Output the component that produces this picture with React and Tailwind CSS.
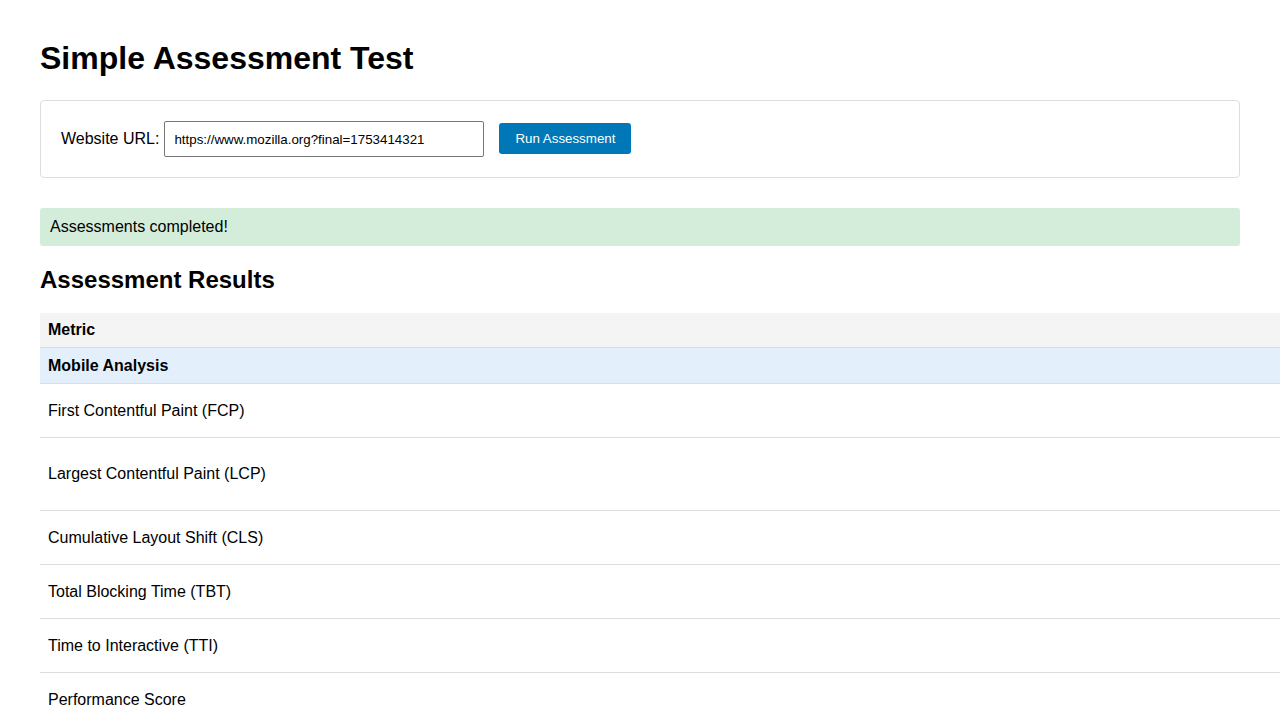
import React from 'react';

const rows = [
  { name: 'First Contentful Paint (FCP)', h: 'h-[54px]' },
  { name: 'Largest Contentful Paint (LCP)', h: 'h-[73px]' },
  { name: 'Cumulative Layout Shift (CLS)', h: 'h-[54px]' },
  { name: 'Total Blocking Time (TBT)', h: 'h-[54px]' },
  { name: 'Time to Interactive (TTI)', h: 'h-[54px]' },
  { name: 'Performance Score', h: 'h-[54px]' },
];

export default function App() {
  return (
    <div className="w-[1280px] h-[720px] overflow-hidden bg-white text-black font-['Liberation_Sans',Arial,sans-serif]">
      <div className="p-10">
        {/* Title */}
        <h1 className="text-[32px] leading-[37px] font-bold mb-[23px]">Simple Assessment Test</h1>

        {/* Form */}
        <div className="w-[1200px] border border-[#ddd] rounded p-5 flex items-center">
          <label className="text-base leading-[18px] mr-[5px]">Website URL:</label>
          <input
            type="text"
            readOnly
            value="https://www.mozilla.org?final=1753414321"
            className="w-[320px] h-9 border border-[#767676] rounded-[2px] px-[9px] text-[13.33px] text-black outline-none"
          />
          <button className="ml-[15px] -mt-[1px] h-[31px] px-4 bg-[#0078b8] text-white text-[13.33px] rounded-[3px]">
            Run Assessment
          </button>
        </div>

        {/* Status */}
        <div className="w-[1200px] mt-[30px] bg-[#d4edda] rounded-[3px] px-[10px] py-[10px] text-base leading-[18px]">
          Assessments completed!
        </div>

        <h2 className="mt-[20px] text-2xl leading-7 font-bold">Assessment Results</h2>

        {/* Results table */}
        <table className="mt-[19px] w-[1400px] border-collapse text-base leading-[18px]">
          <thead>
            <tr className="bg-[#f4f4f4] border-b border-[#ddd]">
              <th className="text-left font-bold px-2 py-2 h-[34px]">Metric</th>
            </tr>
          </thead>
          <tbody>
            <tr className="bg-[#e3f0fb] border-b border-[#ddd]">
              <td className="font-bold px-2 h-[36px]">Mobile Analysis</td>
            </tr>
            {rows.map((r) => (
              <tr key={r.name} className="border-b border-[#ddd]">
                <td className={`px-2 align-middle ${r.h}`}>{r.name}</td>
              </tr>
            ))}
          </tbody>
        </table>
      </div>
    </div>
  );
}
